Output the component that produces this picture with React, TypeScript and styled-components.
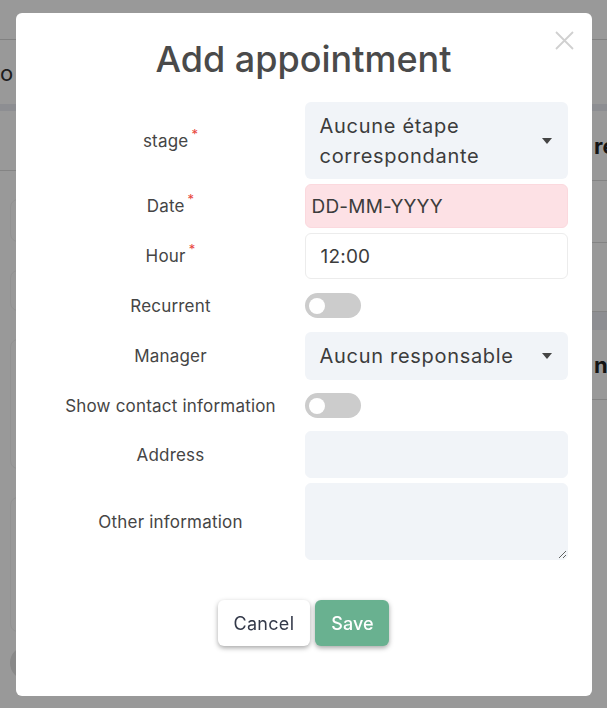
import styled, { createGlobalStyle } from "styled-components";

const GlobalStyle = createGlobalStyle`
  html, body {
    margin: 0;
    padding: 0;
    background: #ffffff;
    overflow: hidden;
  }
  body {
    font-family: Inter, "Noto Sans", sans-serif;
  }
  * {
    box-sizing: border-box;
  }
`;

type Field =
  | { kind: "select"; label: string; value: string; required?: boolean; height: number }
  | { kind: "text"; label: string; value: string; tone: "error" | "plain"; required?: boolean; height: number }
  | { kind: "toggle"; label: string; height: number }
  | { kind: "area"; label: string; height: number };

const fields: Field[] = [
  { kind: "select", label: "stage", value: "Aucune étape correspondante", required: true, height: 77 },
  { kind: "text", label: "Date", value: "DD-MM-YYYY", tone: "error", required: true, height: 44 },
  { kind: "text", label: "Hour", value: "12:00", tone: "plain", required: true, height: 46 },
  { kind: "toggle", label: "Recurrent", height: 43 },
  { kind: "select", label: "Manager", value: "Aucun responsable", height: 48 },
  { kind: "toggle", label: "Show contact information", height: 41 },
  { kind: "text", label: "Address", value: "", tone: "plain", height: 47 },
  { kind: "area", label: "Other information", height: 77 },
];

export default function App() {
  const renderField = (f: Field) => {
    switch (f.kind) {
      case "select":
        return (
          <SelectBox>
            <span>{f.value}</span>
            <Caret />
          </SelectBox>
        );
      case "text":
        return (
          <TextInput
            $tone={f.tone}
            $filled={f.label === "Address"}
            defaultValue={f.value}
          />
        );
      case "toggle":
        return (
          <ToggleCell>
            <Track>
              <Knob />
            </Track>
          </ToggleCell>
        );
      case "area":
        return <TextArea />;
    }
  };

  return (
    <>
      <GlobalStyle />
      <Page>
        <TopBar />
        <SubBar>
          <SubTitle>o</SubTitle>
        </SubBar>
        <Band $h={7} />
        <Columns>
          <LeftPane>
            <LeftHead />
            <GhostCard $h={43} />
            <GhostCard $h={41} />
            <GhostCard $h={130} />
            <GhostCard $h={135} />
            <Avatar />
          </LeftPane>
          <RightPane>
            <TableHead>réunions</TableHead>
            <TableRow $h={62} />
            <TableRow $h={69} />
            <Band $h={18} />
            <TableHead>nextes</TableHead>
          </RightPane>
        </Columns>
      </Page>

      <Overlay>
        <Modal>
          <CloseButton aria-label="close">
            <svg width="19" height="19" viewBox="0 0 19 19">
              <path
                d="M1 1 L18 18 M18 1 L1 18"
                stroke="#d0d0d0"
                strokeWidth="1.8"
                fill="none"
              />
            </svg>
          </CloseButton>
          <Title>Add appointment</Title>
          <Form>
            {fields.map((f) => (
              <Row key={f.label} $h={f.height}>
                <Label>
                  <span>{f.label}</span>
                  {"required" in f && f.required && <Star>*</Star>}
                </Label>
                {renderField(f)}
              </Row>
            ))}
          </Form>
          <Actions>
            <CancelButton>Cancel</CancelButton>
            <SaveButton>Save</SaveButton>
          </Actions>
        </Modal>
      </Overlay>
    </>
  );
}

/* background page, dimmed by the overlay */

const Page = styled.div`
  width: 100vw;
  height: 100vh;
  overflow: hidden;
  background: #ffffff;
`;

const TopBar = styled.div`
  height: 40px;
  border-bottom: 1px solid #d8d8d8;
`;

const SubBar = styled.div`
  height: 64px;
  display: flex;
  align-items: center;
`;

const SubTitle = styled.span`
  font-size: 22px;
  color: #333;
  padding-top: 2px;
`;

const Band = styled.div<{ $h: number }>`
  height: ${(p) => p.$h}px;
  background: #ecedf3;
`;

const Columns = styled.div`
  display: grid;
  grid-template-columns: 592px 1fr;
`;

const LeftPane = styled.div`
  display: flex;
  flex-direction: column;
  gap: 28px;
  padding-left: 10px;
`;

const LeftHead = styled.div`
  height: 60px;
  margin-left: -10px;
  border-bottom: 1px solid #dddddd;
`;

const GhostCard = styled.div<{ $h: number }>`
  height: ${(p) => p.$h}px;
  width: 300px;
  border: 1px solid #f4f4f4;
  border-radius: 8px;
`;

const Avatar = styled.div`
  width: 34px;
  height: 34px;
  border-radius: 50%;
  background: #e4e4e4;
  margin-top: -14px;
`;

const RightPane = styled.div`
  display: flex;
  flex-direction: column;
`;

const TableHead = styled.div`
  height: 70px;
  display: flex;
  align-items: center;
  padding-left: 2px;
  font-size: 22px;
  font-weight: 700;
  color: #222;
  white-space: nowrap;
  border-bottom: 1px solid #dddddd;
`;

const TableRow = styled.div<{ $h: number }>`
  height: ${(p) => p.$h}px;
  border-bottom: 1px solid #dddddd;
`;

/* modal */

const Overlay = styled.div`
  position: fixed;
  inset: 0;
  background: rgba(0, 0, 0, 0.4);
  display: flex;
  justify-content: center;
  align-items: flex-start;
  padding-top: 13px;
`;

const Modal = styled.div`
  position: relative;
  width: 576px;
  height: 683px;
  background: #ffffff;
  border-radius: 6px;
  display: flex;
  flex-direction: column;
`;

const CloseButton = styled.button`
  position: absolute;
  top: 18px;
  right: 18px;
  width: 19px;
  height: 19px;
  padding: 0;
  border: none;
  background: transparent;
  display: flex;
  cursor: pointer;
`;

const Title = styled.h1`
  margin: 24px 0 21px;
  text-align: center;
  font-size: 36px;
  line-height: 44px;
  font-weight: 500;
  color: #4a4a4a;
`;

const Form = styled.div`
  display: flex;
  flex-direction: column;
  gap: 5px;
  padding: 0 24px 0 29px;
`;

const Row = styled.div<{ $h: number }>`
  display: grid;
  grid-template-columns: 1fr 263px;
  column-gap: 8px;
  height: ${(p) => p.$h}px;
`;

const Label = styled.div`
  display: flex;
  align-items: center;
  justify-content: center;
  font-size: 17px;
  letter-spacing: 0.2px;
  color: #454545;
`;

const Star = styled.span`
  color: #e8453c;
  font-size: 13px;
  position: relative;
  top: -7px;
  margin-left: 3px;
`;

const SelectBox = styled.div`
  display: flex;
  align-items: center;
  justify-content: space-between;
  gap: 12px;
  padding: 8px 16px 8px 15px;
  background: #f1f4f8;
  border-radius: 6px;
  font-size: 20px;
  letter-spacing: 0.7px;
  line-height: 30px;
  color: #3c3c3c;
`;

const Caret = styled.span`
  flex: none;
  width: 0;
  height: 0;
  border-left: 5.5px solid transparent;
  border-right: 5.5px solid transparent;
  border-top: 6px solid #454545;
`;

const TextInput = styled.input<{ $tone: "error" | "plain"; $filled: boolean }>`
  width: 100%;
  height: 100%;
  font-family: inherit;
  font-size: 19px;
  letter-spacing: 0.2px;
  color: #3c3c3c;
  border-radius: 6px;
  outline: none;
  padding: 0 0 0 ${(p) => (p.$tone === "error" ? "6px" : "15px")};
  background: ${(p) =>
    p.$tone === "error" ? "#fde1e5" : p.$filled ? "#f1f4f8" : "#ffffff"};
  border: 1px solid
    ${(p) =>
      p.$tone === "error" ? "#fbd9de" : p.$filled ? "#f1f4f8" : "#ececec"};
`;

const TextArea = styled.textarea`
  width: 100%;
  height: 100%;
  font-family: inherit;
  font-size: 19px;
  background: #f1f4f8;
  border: 1px solid #f1f4f8;
  border-radius: 6px;
  outline: none;
`;

const ToggleCell = styled.div`
  display: flex;
  align-items: center;
`;

const Track = styled.div`
  width: 56px;
  height: 25px;
  border-radius: 13px;
  background: #cccccc;
  display: flex;
  align-items: center;
  padding-left: 4px;
`;

const Knob = styled.span`
  width: 16px;
  height: 16px;
  border-radius: 50%;
  background: #ffffff;
`;

const Actions = styled.div`
  display: flex;
  justify-content: center;
  gap: 5px;
  margin-top: 40px;
`;

const BaseButton = styled.button`
  height: 46px;
  padding: 0 16px;
  border: none;
  border-radius: 6px;
  font-family: inherit;
  font-size: 18px;
  cursor: pointer;
  box-shadow: 0 2px 5px rgba(0, 0, 0, 0.35);
`;

const CancelButton = styled(BaseButton)`
  background: #ffffff;
  color: #343a4a;
  padding: 0 16px;
  letter-spacing: 0.3px;
`;

const SaveButton = styled(BaseButton)`
  background: #69b190;
  color: #ffffff;
  font-weight: 500;
`;
